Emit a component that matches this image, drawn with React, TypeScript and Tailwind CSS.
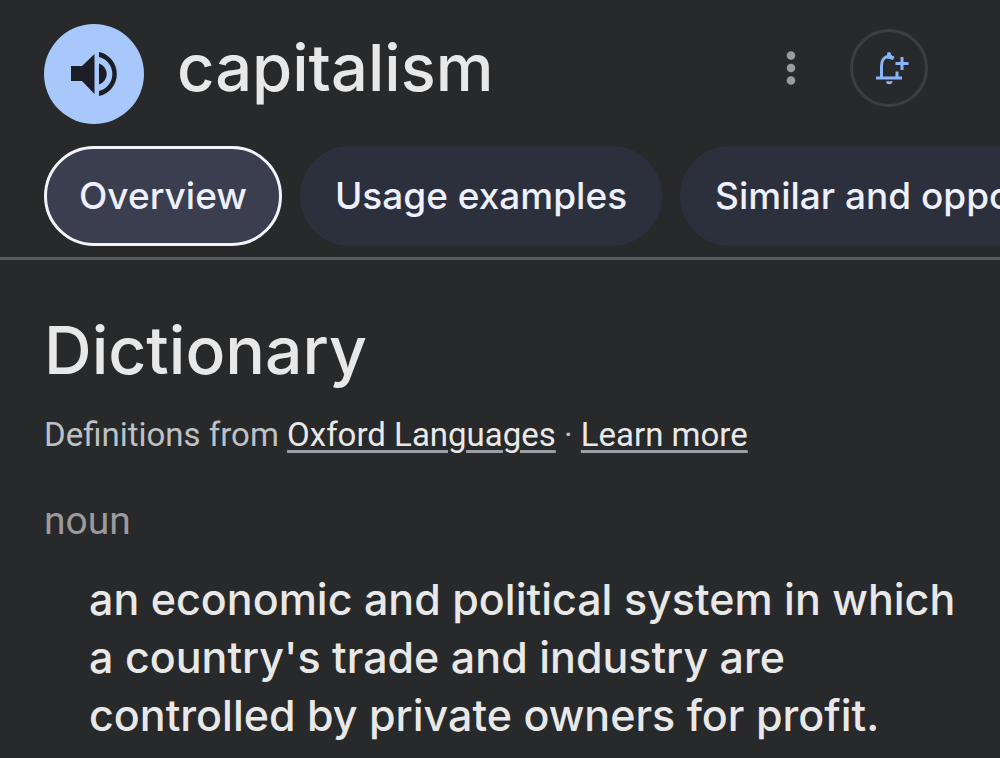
import React, { useState } from 'react';

const tabs = ['Overview', 'Usage examples', 'Similar and opposite words'];

function SpeakerIcon() {
  return (
    <svg viewBox="0 0 48 48" className="size-12" fill="currentColor" aria-hidden="true">
      <path d="M1 16h11L24.500 4v40L12 31H1z" />
      <path d="M29 13.500a11 11 0 0 1 0 21z" />
      <path d="M29 2a22.500 22.500 0 0 1 0 44v-5a17.500 17.500 0 0 0 0-34z" />
    </svg>
  );
}

function DotsIcon() {
  return (
    <svg viewBox="0 0 10 34" className="h-[34px] w-[10px]" fill="currentColor" aria-hidden="true">
      <circle cx="5" cy="4.500" r="4.300" />
      <circle cx="5" cy="17" r="4.300" />
      <circle cx="5" cy="29.500" r="4.300" />
    </svg>
  );
}

function AddAlertIcon() {
  return (
    <svg viewBox="0 0 40 40" className="size-10" aria-hidden="true">
      <g fill="none" stroke="currentColor" strokeWidth="3">
        <path d="M7 30h26" />
        <path d="M12.500 29.500V17.500c0-5.500 3-9 7.500-9 1.800 0 3 .4 4.300 1.300" />
        <path d="M28 23.500v6" />
        <path d="M26.500 15.500h13M33 9v13" />
      </g>
      <path fill="currentColor" d="M16.500 8.500c1.200-.6 1.500-1.500 1.500-2.500a2 2 0 0 1 4 0c0 1 .6 2 3.500 3.200L24 12l-7.500-2z" />
      <path fill="currentColor" d="M17 33.200h6.500a3.200 3 0 0 1-6.500 0z" />
    </svg>
  );
}

export default function App() {
  const [active, setActive] = useState('Overview');

  return (
    <div className="min-h-screen overflow-hidden bg-[#28292a] font-['Inter',sans-serif] text-[#e8e8e8]">
      <header className="border-b-3 border-[#58595a] pb-[11px]">
        <div className="flex items-center justify-between pt-6 pr-[72px] pl-11">
          <div className="flex items-center gap-[33px]">
            <button
              type="button"
              aria-label="Listen"
              className="flex size-[100px] items-center justify-center rounded-full bg-[#a8c7fa] text-[#1b1f25]"
            >
              <SpeakerIcon />
            </button>
            <h1 className="pb-3 text-[65px] leading-[76px] font-medium">capitalism</h1>
          </div>
          <div className="flex items-center gap-[54px] pb-3">
            <button type="button" aria-label="More options" className="text-[#9b9b9b]">
              <DotsIcon />
            </button>
            <button
              type="button"
              aria-label="Get notified"
              className="flex size-[78px] items-center justify-center rounded-full border-3 border-[#3d3e40] text-[#8ab4f8]"
            >
              <AddAlertIcon />
            </button>
          </div>
        </div>

        <nav className="mt-[22px] flex gap-[18px] overflow-x-auto pl-11 [scrollbar-width:none]">
          {tabs.map((tab) => (
            <button
              key={tab}
              type="button"
              onClick={() => setActive(tab)}
              className={`h-[100px] shrink-0 rounded-full border-3 px-8 text-[37px] font-medium whitespace-nowrap text-[#edf0ff] ${
                tab === active ? 'border-[#f2f3fb] bg-[#3b3e4e]' : 'border-[#2c2f3c] bg-[#2c2f3c]'
              }`}
            >
              {tab}
            </button>
          ))}
        </nav>
      </header>

      <main className="pt-12 pr-8 pl-11">
        <h2 className="text-[66px] leading-[84px] font-medium">Dictionary</h2>
        <p className="mt-[21px] font-['Roboto',sans-serif] text-[33px] leading-[44px] text-[#bdc1c6]">
          Definitions from{' '}
          <a href="#oxford" className="text-[#e8e8e8] underline decoration-[#9aa0a6] decoration-3 underline-offset-4">
            Oxford Languages
          </a>
          {' · '}
          <a href="#learn-more" className="text-[#e8e8e8] underline decoration-[#9aa0a6] decoration-3 underline-offset-4">
            Learn more
          </a>
        </p>
        <p className="mt-10 font-['Roboto',sans-serif] text-[39px] leading-[48px] text-[#9b9b9b]">noun</p>
        <p className="mt-[25px] pl-[45px] text-[43px] leading-[58px] font-medium">
          an economic and political system in which a country's trade and industry are controlled by private owners for profit.
        </p>
      </main>
    </div>
  );
}
